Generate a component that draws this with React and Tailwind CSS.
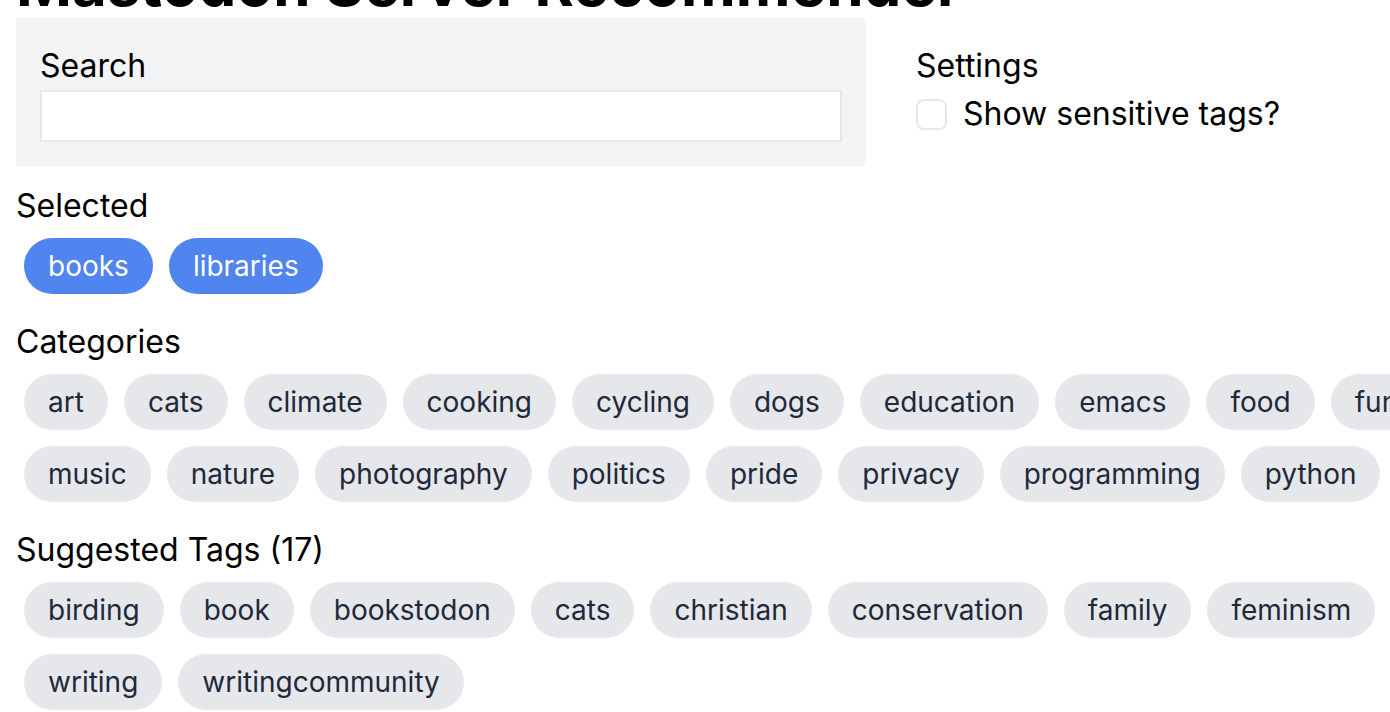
const selected = ["books", "libraries"];

const categories = [
  "art", "cats", "climate", "cooking", "cycling", "dogs", "education", "emacs",
  "food", "fun", "gaming", "history", "literature", "memes", "movies",
  "music", "nature", "photography", "politics", "pride", "privacy",
  "programming", "python", "science", "space", "tech", "travel",
];

const suggested = [
  "birding", "book", "bookstodon", "cats", "christian", "conservation",
  "family", "feminism", "fiction", "film", "food", "poetry", "scifi", "tea",
  "tv", "writing", "writingcommunity",
];

function Chip({ label, active }) {
  return (
    <button
      className={`m-2 px-6 py-2 rounded-full text-[28px] leading-10 ${
        active ? "bg-[#5084ee] text-white" : "bg-gray-200 text-gray-800"
      }`}
    >
      {label}
    </button>
  );
}

function ChipRow({ items, active }) {
  return (
    <div className="flex flex-wrap w-[2300px]">
      {items.map((t) => (
        <Chip key={t} label={t} active={active} />
      ))}
    </div>
  );
}

export default function App() {
  return (
    <div
      className="w-full h-[712px] overflow-hidden bg-white text-black"
      style={{ fontFamily: "Inter, 'Noto Sans', sans-serif" }}
    >
      <div className="px-4">
        <h1 className="text-[60px] leading-[60px] font-bold -mt-[46px] mb-[4px] whitespace-nowrap">
          Mastodon Server Recommender
        </h1>

        {/* Search + settings */}
        <div className="flex gap-[50px] mb-4">
          <div className="w-[850px] bg-gray-100 p-6">
            <label className="block text-[32px] leading-12">Search</label>
            <input className="block w-full h-[52px] bg-white border-2 border-gray-200 px-3 text-[28px] outline-none" />
          </div>

          <div className="pt-6">
            <div className="text-[32px] leading-12">Settings</div>
            <label className="flex items-center gap-4 text-[32px] leading-12">
              <span className="w-[31px] h-[31px] rounded-lg border-2 border-gray-200 bg-white"></span>
              Show sensitive tags?
            </label>
          </div>
        </div>

        <div className="mb-4">
          <div className="text-[32px] leading-12">Selected</div>
          <ChipRow items={selected} active />
        </div>

        <div className="mb-4">
          <div className="text-[32px] leading-12">Categories</div>
          <ChipRow items={categories} />
        </div>

        <div className="mb-4">
          <div className="text-[32px] leading-12">Suggested Tags ({suggested.length})</div>
          <ChipRow items={suggested} />
        </div>
      </div>
    </div>
  );
}
